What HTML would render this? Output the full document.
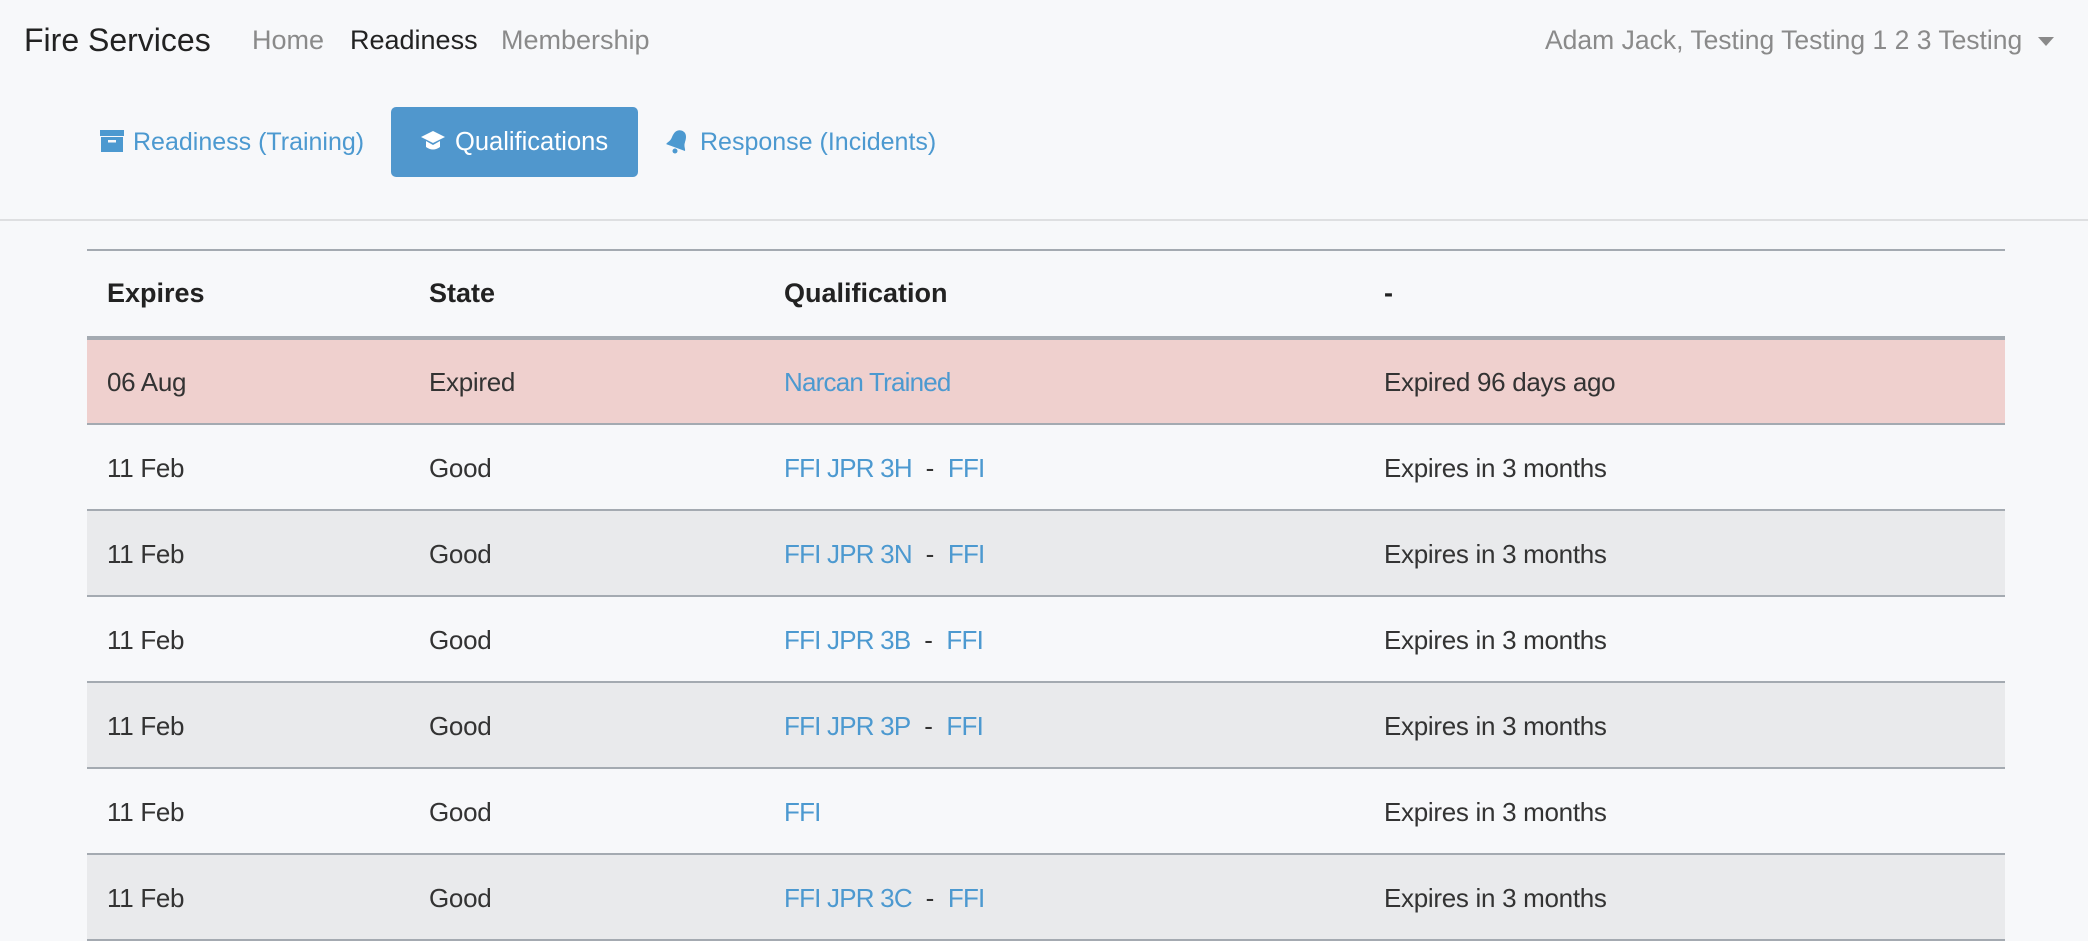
<!DOCTYPE html>
<html><head><meta charset="utf-8"><style>
*{margin:0;padding:0;box-sizing:border-box}
body{width:2088px;height:892px;overflow:hidden;background:#f7f8fa;font-family:"Liberation Sans",sans-serif;color:#222;position:relative}
.a{position:absolute;white-space:nowrap;line-height:1}
.nav{font-size:27px;color:#8a8a8a;top:27px}
.blue{color:#4c99d0}
.btn{position:absolute;left:391px;top:107px;width:247px;height:70px;background:#5097cd;border-radius:5px}
.sep{position:absolute;left:0;top:219px;width:2088px;height:2px;background:#dedfe1}
table{position:absolute;left:87px;top:249px;width:1918px;border-collapse:collapse;font-size:26px}
thead tr{height:88px;border-top:2px solid #a4aab1;border-bottom:4px solid #a4aab1}
th{text-align:left;font-weight:bold;color:#222;font-size:27px}
td{color:#333;letter-spacing:-0.3px;padding-top:2px}
tbody tr{height:86px;border-bottom:2px solid #a4aab1}
th,td{padding-left:20px}
.c1{width:322px}.c2{width:355px}.c3{width:600px}
tr.r{background:#efd0ce}tr.s{background:#e9eaec}
a{color:#4c99d0;text-decoration:none;letter-spacing:-0.8px}
</style></head><body>
<div class="a" style="left:24px;top:24px;font-size:32px;color:#222">Fire Services</div>
<div class="a nav" style="left:252px">Home</div>
<div class="a nav" style="left:350px;color:#222">Readiness</div>
<div class="a nav" style="left:501px">Membership</div>
<div class="a nav" style="left:1545px;font-size:26.5px">Adam Jack, Testing Testing 1 2 3 Testing</div>
<div class="a" style="left:2038px;top:37px;width:0;height:0;border-left:8px solid transparent;border-right:8px solid transparent;border-top:9px solid #8a8a8a"></div>

<svg class="a" style="left:100px;top:130px" width="24" height="22" viewBox="0 0 24 22"><rect x="0" y="0" width="24" height="6" fill="#4c99d0"/><rect x="1" y="7" width="22" height="15" fill="#4c99d0"/><rect x="8" y="10" width="8" height="2.5" fill="#f7f8fa"/></svg>
<div class="a blue" style="left:133px;top:130px;font-size:25px">Readiness (Training)</div>
<div class="btn"></div>
<svg class="a" style="left:420px;top:130px" width="26" height="22" viewBox="0 0 26 22"><path d="M13 1 L25 7 L13 13 L1 7 Z" fill="#fff"/><path d="M6 11 V17 Q13 22 20 17 V11 L13 15 Z" fill="#fff"/></svg>
<div class="a" style="left:455px;top:130px;font-size:25.5px;color:#fff">Qualifications</div>
<svg class="a" style="left:666px;top:128px" width="24" height="26" viewBox="0 0 24 26"><path d="M12 2 C6 2 5 8 5 12 C5 16 2 18 2 20 L22 20 C22 18 19 16 19 12 C19 8 18 2 12 2 Z" fill="#4c99d0" transform="rotate(20 12 13)"/><circle cx="9" cy="23" r="2.5" fill="#4c99d0"/></svg>
<div class="a blue" style="left:700px;top:130px;font-size:25px">Response (Incidents)</div>
<div class="sep"></div>

<table>
<thead><tr><th class="c1">Expires</th><th class="c2">State</th><th class="c3">Qualification</th><th>-</th></tr></thead>
<tbody>
<tr class="r"><td>06 Aug</td><td>Expired</td><td><a>Narcan Trained</a></td><td>Expired 96 days ago</td></tr>
<tr><td>11 Feb</td><td>Good</td><td><a>FFI JPR 3H</a> &nbsp;-&nbsp; <a>FFI</a></td><td>Expires in 3 months</td></tr>
<tr class="s"><td>11 Feb</td><td>Good</td><td><a>FFI JPR 3N</a> &nbsp;-&nbsp; <a>FFI</a></td><td>Expires in 3 months</td></tr>
<tr><td>11 Feb</td><td>Good</td><td><a>FFI JPR 3B</a> &nbsp;-&nbsp; <a>FFI</a></td><td>Expires in 3 months</td></tr>
<tr class="s"><td>11 Feb</td><td>Good</td><td><a>FFI JPR 3P</a> &nbsp;-&nbsp; <a>FFI</a></td><td>Expires in 3 months</td></tr>
<tr><td>11 Feb</td><td>Good</td><td><a>FFI</a></td><td>Expires in 3 months</td></tr>
<tr class="s"><td>11 Feb</td><td>Good</td><td><a>FFI JPR 3C</a> &nbsp;-&nbsp; <a>FFI</a></td><td>Expires in 3 months</td></tr>
</tbody></table>
</body></html>
